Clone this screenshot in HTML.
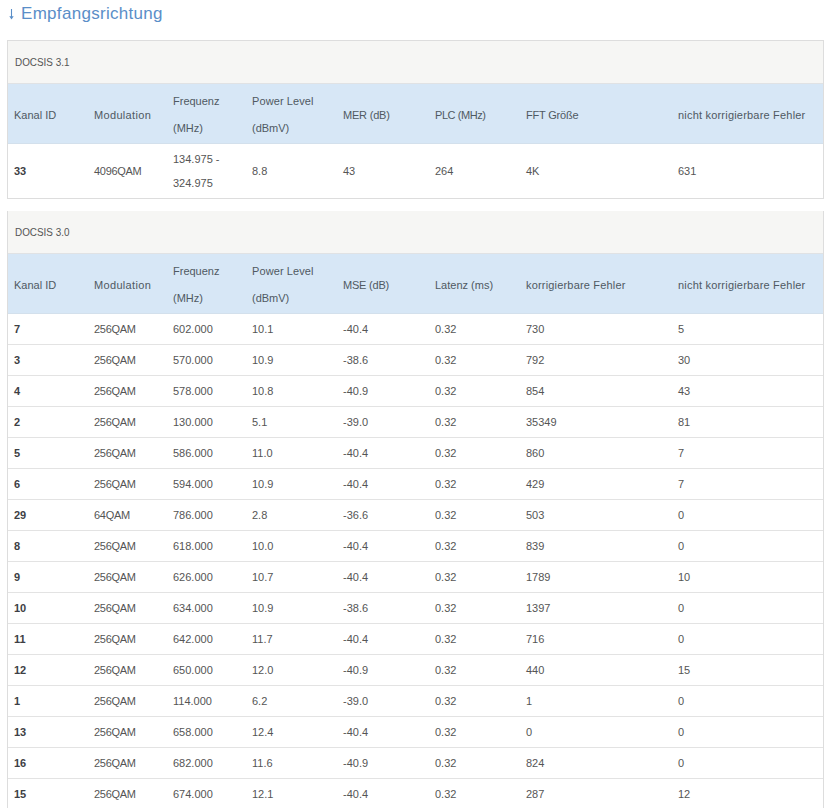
<!DOCTYPE html>
<html><head><meta charset="utf-8"><style>
html,body{margin:0;padding:0;background:#fff;width:832px;height:808px;overflow:hidden;position:relative}
body{font-family:"Liberation Sans",sans-serif;}
.title{position:absolute;left:21px;top:1px;font-size:17px;letter-spacing:0.3px;color:#5a8ec8;line-height:26px;white-space:nowrap}
.arrow{position:absolute;left:0;top:0;width:20px;height:24px}
.box{position:absolute;left:7px;width:815px;border:1px solid #dddddd;background:#fff}
.b1{top:40px;}
.b2{top:211px;border-top:none}
.cap{height:42px;line-height:42px;background:#f6f6f4;padding-left:7px;font-size:11px;color:#555;white-space:nowrap;border-bottom:1px solid #e0e2e4}
.cap span{display:inline-block;transform:scaleX(0.9);transform-origin:0 50%}
table{border-collapse:collapse;table-layout:fixed;width:815px}
th,td{padding:0 0 0 6px;text-align:left;white-space:nowrap;overflow:hidden}
tr.hd th{background:#d7e7f6;height:59px;box-sizing:border-box;padding-top:18px;line-height:27px;font-weight:normal;font-size:11px;color:#4f5962;vertical-align:top;border-bottom:1px solid #d3e0ec}
tr.hd th.two{padding-top:4px}
td{height:30px;line-height:24px;font-size:11px;color:#555;border-top:1px solid #e3e3e3;vertical-align:middle}
tr.hd+tr td{border-top:none}
tr.r2 td{height:54px}
td.id{font-weight:bold;color:#3d4044}
td.mod{letter-spacing:-0.3px}
</style></head><body>
<svg class="arrow" viewBox="0 0 20 24"><line x1="11.5" y1="9" x2="11.5" y2="17" stroke="#5a8ec8" stroke-width="1.1"/><polygon points="9.3,16.3 13.7,16.3 11.5,19.4" fill="#5a8ec8"/></svg>
<div class="title">Empfangsrichtung</div>
<div class="box b1"><div class="cap"><span>DOCSIS 3.1</span></div><table><colgroup><col style="width:80px"><col style="width:79px"><col style="width:79px"><col style="width:91px"><col style="width:92px"><col style="width:91px"><col style="width:152px"><col style="width:151px"></colgroup><tr class="hd"><th>Kanal ID</th><th><span style="letter-spacing:0.33px">Modulation</span></th><th class="two"><span style="letter-spacing:0px">Frequenz</span><br>(MHz)</th><th class="two"><span style="letter-spacing:0.1px">Power Level</span><br>(dBmV)</th><th><span style="letter-spacing:-0.2px">MER (dB)</span></th><th><span style="letter-spacing:-0.44px">PLC (MHz)</span></th><th><span style="letter-spacing:-0.19px">FFT Größe</span></th><th><span style="letter-spacing:0.2px">nicht korrigierbare Fehler</span></th></tr><tr class="r2"><td class="id">33</td><td class="mod">4096QAM</td><td>134.975 -<br>324.975</td><td>8.8</td><td>43</td><td>264</td><td>4K</td><td>631</td></tr></table></div><div class="box b2"><div class="cap"><span>DOCSIS 3.0</span></div><table><colgroup><col style="width:80px"><col style="width:79px"><col style="width:79px"><col style="width:91px"><col style="width:92px"><col style="width:91px"><col style="width:152px"><col style="width:151px"></colgroup><tr class="hd"><th>Kanal ID</th><th><span style="letter-spacing:0.33px">Modulation</span></th><th class="two"><span style="letter-spacing:0px">Frequenz</span><br>(MHz)</th><th class="two"><span style="letter-spacing:0.1px">Power Level</span><br>(dBmV)</th><th><span style="letter-spacing:-0.2px">MSE (dB)</span></th><th>Latenz (ms)</th><th><span style="letter-spacing:0.18px">korrigierbare Fehler</span></th><th><span style="letter-spacing:0.2px">nicht korrigierbare Fehler</span></th></tr><tr><td class="id">7</td><td class="mod">256QAM</td><td>602.000</td><td>10.1</td><td>-40.4</td><td>0.32</td><td>730</td><td>5</td></tr><tr><td class="id">3</td><td class="mod">256QAM</td><td>570.000</td><td>10.9</td><td>-38.6</td><td>0.32</td><td>792</td><td>30</td></tr><tr><td class="id">4</td><td class="mod">256QAM</td><td>578.000</td><td>10.8</td><td>-40.9</td><td>0.32</td><td>854</td><td>43</td></tr><tr><td class="id">2</td><td class="mod">256QAM</td><td>130.000</td><td>5.1</td><td>-39.0</td><td>0.32</td><td>35349</td><td>81</td></tr><tr><td class="id">5</td><td class="mod">256QAM</td><td>586.000</td><td>11.0</td><td>-40.4</td><td>0.32</td><td>860</td><td>7</td></tr><tr><td class="id">6</td><td class="mod">256QAM</td><td>594.000</td><td>10.9</td><td>-40.4</td><td>0.32</td><td>429</td><td>7</td></tr><tr><td class="id">29</td><td class="mod">64QAM</td><td>786.000</td><td>2.8</td><td>-36.6</td><td>0.32</td><td>503</td><td>0</td></tr><tr><td class="id">8</td><td class="mod">256QAM</td><td>618.000</td><td>10.0</td><td>-40.4</td><td>0.32</td><td>839</td><td>0</td></tr><tr><td class="id">9</td><td class="mod">256QAM</td><td>626.000</td><td>10.7</td><td>-40.4</td><td>0.32</td><td>1789</td><td>10</td></tr><tr><td class="id">10</td><td class="mod">256QAM</td><td>634.000</td><td>10.9</td><td>-38.6</td><td>0.32</td><td>1397</td><td>0</td></tr><tr><td class="id">11</td><td class="mod">256QAM</td><td>642.000</td><td>11.7</td><td>-40.4</td><td>0.32</td><td>716</td><td>0</td></tr><tr><td class="id">12</td><td class="mod">256QAM</td><td>650.000</td><td>12.0</td><td>-40.9</td><td>0.32</td><td>440</td><td>15</td></tr><tr><td class="id">1</td><td class="mod">256QAM</td><td>114.000</td><td>6.2</td><td>-39.0</td><td>0.32</td><td>1</td><td>0</td></tr><tr><td class="id">13</td><td class="mod">256QAM</td><td>658.000</td><td>12.4</td><td>-40.4</td><td>0.32</td><td>0</td><td>0</td></tr><tr><td class="id">16</td><td class="mod">256QAM</td><td>682.000</td><td>11.6</td><td>-40.9</td><td>0.32</td><td>824</td><td>0</td></tr><tr><td class="id">15</td><td class="mod">256QAM</td><td>674.000</td><td>12.1</td><td>-40.4</td><td>0.32</td><td>287</td><td>12</td></tr></table></div>
</body></html>
